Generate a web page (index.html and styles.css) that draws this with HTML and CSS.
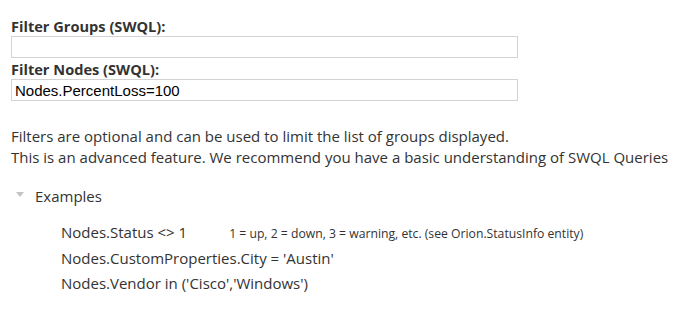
FILE: index.html
```html
<!DOCTYPE html>
<html lang="en">
<head>
  <meta charset="UTF-8">
  <title>Filter Settings</title>
  <link rel="stylesheet" href="styles.css">
</head>
<body>
  <div class="filters">
    <label class="field-label" for="filter-groups">Filter Groups (SWQL):</label>
    <input type="text" id="filter-groups" class="field-input">

    <label class="field-label" for="filter-nodes">Filter Nodes (SWQL):</label>
    <input type="text" id="filter-nodes" class="field-input" value="Nodes.PercentLoss=100">

    <p class="hint">
      Filters are optional and can be used to limit the list of groups displayed.<br>
      This is an advanced feature. We recommend you have a basic understanding of SWQL Queries
    </p>

    <div class="examples">
      <div class="examples-toggle"><span class="arrow"></span>Examples</div>
      <ul class="examples-list">
        <li>Nodes.Status &lt;&gt; 1<span class="note">1 = up, 2 = down, 3 = warning, etc. (see Orion.StatusInfo entity)</span></li>
        <li>Nodes.CustomProperties.City = 'Austin'</li>
        <li>Nodes.Vendor in ('Cisco','Windows')</li>
      </ul>
    </div>
  </div>
</body>
</html>
```

FILE: styles.css
```css
body {
  margin: 0;
  background: #fff;
  font-family: "Open Sans", sans-serif;
  color: #333;
}

.filters {
  padding: 16px 11px 0 11px;
}

.field-label {
  display: block;
  font-size: 14.6px;
  font-weight: bold;
  line-height: 20px;
}

.field-input {
  display: block;
  box-sizing: border-box;
  width: 507px;
  height: 22px;
  margin: 0 0 1px 0;
  padding: 0 3px;
  border: 1px solid #d3d3d3;
  font-family: "Liberation Sans", Arial, sans-serif;
  font-size: 15px;
  color: #000;
  outline: none;
}

.hint {
  margin: 25px 0 0 0;
  font-size: 15px;
  line-height: 21px;
}

.examples {
  margin-top: 18px;
}

.examples-toggle {
  display: flex;
  align-items: center;
  font-size: 15px;
  line-height: 20px;
}

.arrow {
  width: 0;
  height: 0;
  margin: 0 11px 4px 5px;
  border-left: 4px solid transparent;
  border-right: 4px solid transparent;
  border-top: 5px solid #c4c4c4;
}

.examples-list {
  list-style: none;
  margin: 14px 0 0 0;
  padding: 0 0 0 50px;
  font-size: 15px;
  line-height: 25px;
}

.note {
  margin-left: 42px;
  font-size: 12.2px;
}
```
